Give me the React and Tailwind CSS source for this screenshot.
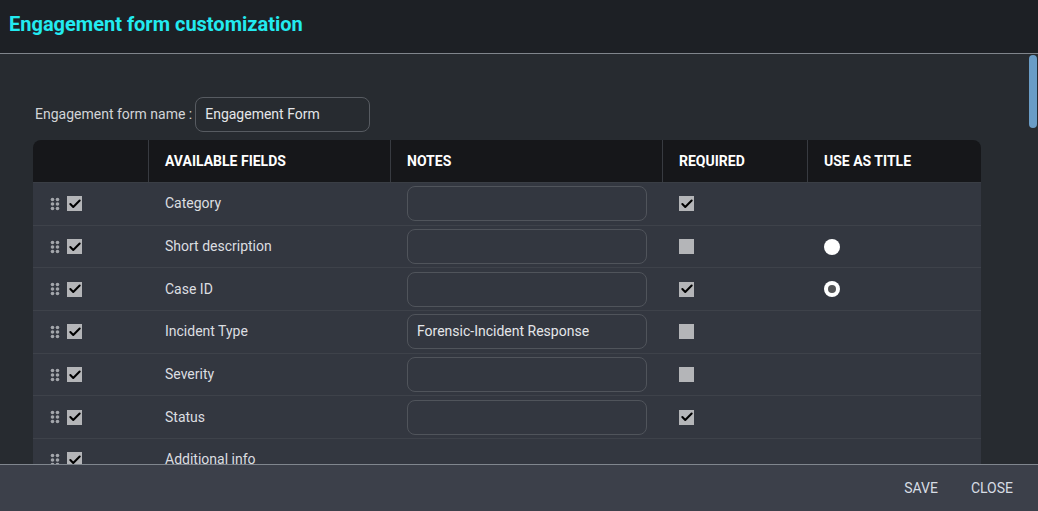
import { Check } from "lucide-react";

const rows = [
  { name: "Category", note: "", required: true, title: null },
  { name: "Short description", note: "", required: false, title: "off" },
  { name: "Case ID", note: "", required: true, title: "on" },
  { name: "Incident Type", note: "Forensic-Incident Response", required: false, title: null },
  { name: "Severity", note: "", required: false, title: null },
  { name: "Status", note: "", required: true, title: null },
  { name: "Additional info", note: null, required: null, title: null },
];

function Box({ checked }) {
  return (
    <span className="w-[15px] h-[15px] bg-[#b4b5b8] flex items-center justify-center">
      {checked && <Check size={14} strokeWidth={3.5} className="text-black" />}
    </span>
  );
}

function Handle() {
  return (
    <svg width="10" height="14" viewBox="0 0 10 14" className="text-[#a3a6ab]">
      {[1.5, 6, 10.5].map((y) => (
        <g key={y}>
          <circle cx="2.5" cy={y + 1} r="1.8" fill="currentColor" />
          <circle cx="7.5" cy={y + 1} r="1.8" fill="currentColor" />
        </g>
      ))}
    </svg>
  );
}

function Radio({ state }) {
  if (state === "on") {
    return (
      <span className="w-[16px] h-[16px] rounded-full bg-white flex items-center justify-center">
        <span className="w-[8px] h-[8px] rounded-full bg-[#545557]" />
      </span>
    );
  }
  return <span className="w-[16px] h-[16px] rounded-full bg-white" />;
}

export default function App() {
  return (
    <div className="w-[1038px] h-[511px] flex flex-col bg-[#272b30] font-['Roboto',sans-serif] text-[14px] overflow-hidden">

      {/* HEADER */}

      <div className="h-[54px] shrink-0 bg-[#1d2025] border-b border-[#80858c] flex items-center px-[9px] pb-[6px]">
        <h1 className="text-[20px] font-bold text-[#22eaf0]">
          Engagement form customization
        </h1>
      </div>

      {/* BODY */}

      <div className="relative flex-1 min-h-0 overflow-hidden">
        <div className="pt-[43px] pl-[33px] pr-[49px] pb-6">

          <div className="flex items-center pl-[2px] mb-[8px]">
            <span className="text-[#d2d4d7]">Engagement form name :</span>
            <div className="ml-[3px] w-[175px] h-[35px] border border-[#575b61] rounded-lg flex items-center px-[9px] text-[#e4e6e9]">
              Engagement Form
            </div>
          </div>

          <div className="w-[948px] rounded-t-lg overflow-hidden">

            <div className="flex h-[43px] bg-[#16171a] text-white font-bold border-b border-[#3a3e45]">
              <div className="w-[116px] border-r border-[#383b41]" />
              <div className="w-[242px] border-r border-[#383b41] flex items-center px-4">AVAILABLE FIELDS</div>
              <div className="w-[272px] border-r border-[#383b41] flex items-center px-4">NOTES</div>
              <div className="w-[145px] border-r border-[#383b41] flex items-center px-4">REQUIRED</div>
              <div className="flex-1 flex items-center px-4">USE AS TITLE</div>
            </div>

            {rows.map((row) => (
              <div
                key={row.name}
                className="flex h-[42.7px] bg-[#333740] border-b border-[#3e424a] text-[#dcdee1]"
              >
                <div className="w-[116px] flex items-center gap-[7px] pl-[17px]">
                  <Handle />
                  <Box checked />
                </div>
                <div className="w-[242px] flex items-center px-4">{row.name}</div>
                <div className="w-[272px] flex items-center px-4">
                  {row.note !== null && (
                    <div className="w-[241px] h-[35px] border border-[#50545b] rounded-lg flex items-center px-[9px] text-[#e4e6e9]">
                      {row.note}
                    </div>
                  )}
                </div>
                <div className="w-[145px] flex items-center pl-[16px]">
                  {row.required !== null && <Box checked={row.required} />}
                </div>
                <div className="flex-1 flex items-center pl-[16px]">
                  {row.title && <Radio state={row.title} />}
                </div>
              </div>
            ))}
          </div>

        </div>

        {/* scroll thumb */}
        <div className="absolute right-[1px] top-[1px] w-[8px] h-[73px] rounded-full bg-[#6a9cc6]" />
      </div>

      {/* FOOTER */}

      <div className="h-[47px] shrink-0 bg-[#3c404a] border-t border-[#80868e] flex items-center justify-end gap-[33px] pr-[25px]">
        <button className="text-[#d7dde4] text-[14px]">SAVE</button>
        <button className="text-[#d7dde4] text-[14px]">CLOSE</button>
      </div>

    </div>
  );
}
